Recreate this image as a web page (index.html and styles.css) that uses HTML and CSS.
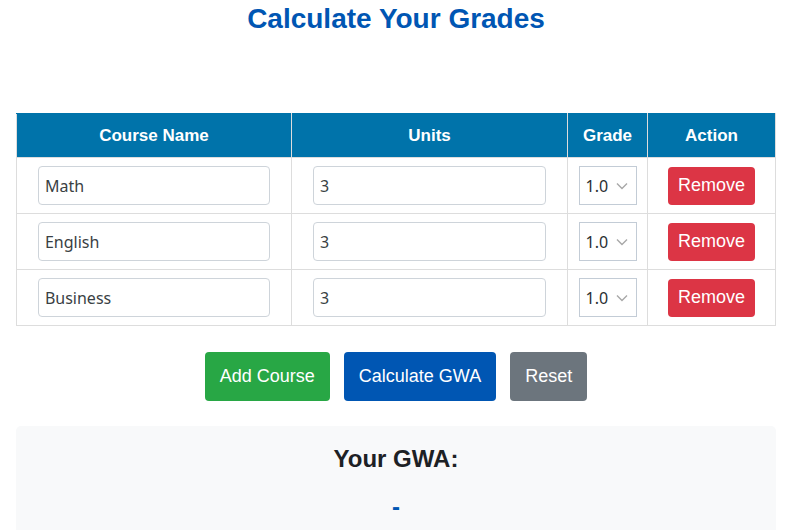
FILE: index.html
```html
<!DOCTYPE html>
<html>
<head>
<meta charset="utf-8">
<link rel="stylesheet" href="styles.css">
</head>
<body>
<div class="page">
  <h1 class="title">Calculate Your Grades</h1>
  <table class="grades">
    <thead>
      <tr>
        <th class="c-name">Course Name</th>
        <th class="c-units">Units</th>
        <th class="c-grade">Grade</th>
        <th class="c-action">Action</th>
      </tr>
    </thead>
    <tbody>
      <tr>
        <td><input class="field" type="text" value="Math"></td>
        <td><input class="field" type="text" value="3"></td>
        <td><div class="select">1.0<svg class="chev" viewBox="0 0 12 8" width="12" height="8"><path d="M1 1.5 L6 6.5 L11 1.5" fill="none" stroke="#a8a8a8" stroke-width="1.4"/></svg></div></td>
        <td><button class="btn btn-remove">Remove</button></td>
      </tr>
      <tr>
        <td><input class="field" type="text" value="English"></td>
        <td><input class="field" type="text" value="3"></td>
        <td><div class="select">1.0<svg class="chev" viewBox="0 0 12 8" width="12" height="8"><path d="M1 1.5 L6 6.5 L11 1.5" fill="none" stroke="#a8a8a8" stroke-width="1.4"/></svg></div></td>
        <td><button class="btn btn-remove">Remove</button></td>
      </tr>
      <tr>
        <td><input class="field" type="text" value="Business"></td>
        <td><input class="field" type="text" value="3"></td>
        <td><div class="select">1.0<svg class="chev" viewBox="0 0 12 8" width="12" height="8"><path d="M1 1.5 L6 6.5 L11 1.5" fill="none" stroke="#a8a8a8" stroke-width="1.4"/></svg></div></td>
        <td><button class="btn btn-remove">Remove</button></td>
      </tr>
    </tbody>
  </table>
  <div class="actions">
    <button class="btn btn-big btn-add">Add Course</button>
    <button class="btn btn-big btn-calc">Calculate GWA</button>
    <button class="btn btn-big btn-reset">Reset</button>
  </div>
  <div class="result">
    <h2 class="result-title">Your GWA:</h2>
    <div class="result-value">-</div>
  </div>
</div>
</body>
</html>
```

FILE: styles.css
```css
html, body {
  margin: 0;
  padding: 0;
  background: #fff;
}
body {
  font-family: "Liberation Sans", Arial, sans-serif;
  color: #212529;
}
.page {
  padding: 0 16px;
}
.title {
  margin: 4px 0 0;
  height: 109px;
  text-align: center;
  font-size: 28px;
  line-height: 30px;
  font-weight: bold;
  color: #0056b3;
}
.grades {
  width: 100%;
  border-collapse: collapse;
  table-layout: fixed;
}
.grades th {
  background: #0073aa;
  color: #fff;
  font-size: 17px;
  font-weight: bold;
  height: 43px;
  padding: 0 8px;
  border: 1px solid #dddddd;
  border-top-color: #0073aa;
}
.grades th + th {
  border-left-color: #e8eef3;
}
.c-name { width: 258px; }
.c-units { width: 259px; }
.c-grade { width: 63px; }
.grades td {
  border: 1px solid #dddddd;
  padding: 8px;
  height: 39px;
  text-align: center;
}
.field {
  box-sizing: border-box;
  width: 90%;
  height: 39px;
  border: 1px solid #ced4da;
  border-radius: 4px;
  padding: 0 6px;
  font-family: "Noto Sans", "Open Sans", sans-serif;
  font-size: 16px;
  color: #3a3f44;
  background: #fff;
  display: block;
  margin: 0 auto;
}
.select {
  box-sizing: border-box;
  width: 58px;
  height: 39px;
  margin: 0 auto;
  border: 1px solid #c3ccd6;
  display: flex;
  align-items: center;
  justify-content: space-between;
  padding: 0 8px 0 6px;
  font-family: "Noto Sans", "Open Sans", sans-serif;
  font-size: 16px;
  color: #2b2f33;
  background: #fff;
}
.chev {
  display: block;
}
.btn {
  border: none;
  color: #fff;
  font-family: "Liberation Sans", Arial, sans-serif;
  white-space: nowrap;
  cursor: pointer;
}
.btn-remove {
  background: #dc3545;
  font-size: 18px;
  width: 87px;
  height: 38px;
  border-radius: 4px;
  padding: 0;
}
.actions {
  display: flex;
  justify-content: center;
  gap: 14px;
  margin-top: 26px;
}
.btn-big {
  height: 49px;
  font-size: 18px;
  padding: 0 15px;
  border-radius: 4px;
}
.btn-add { background: #28a745; }
.btn-calc { background: #0056b3; }
.btn-reset { background: #6c757d; }
.result {
  margin-top: 25px;
  background: #f8f9fa;
  border-radius: 5px;
  padding: 18px 0 20px;
  text-align: center;
}
.result-title {
  margin: 0;
  font-size: 24px;
  line-height: 30px;
  font-weight: bold;
  color: #1d2125;
}
.result-value {
  margin-top: 18px;
  font-size: 24px;
  font-weight: bold;
  color: #0056b3;
  line-height: 30px;
}
```
